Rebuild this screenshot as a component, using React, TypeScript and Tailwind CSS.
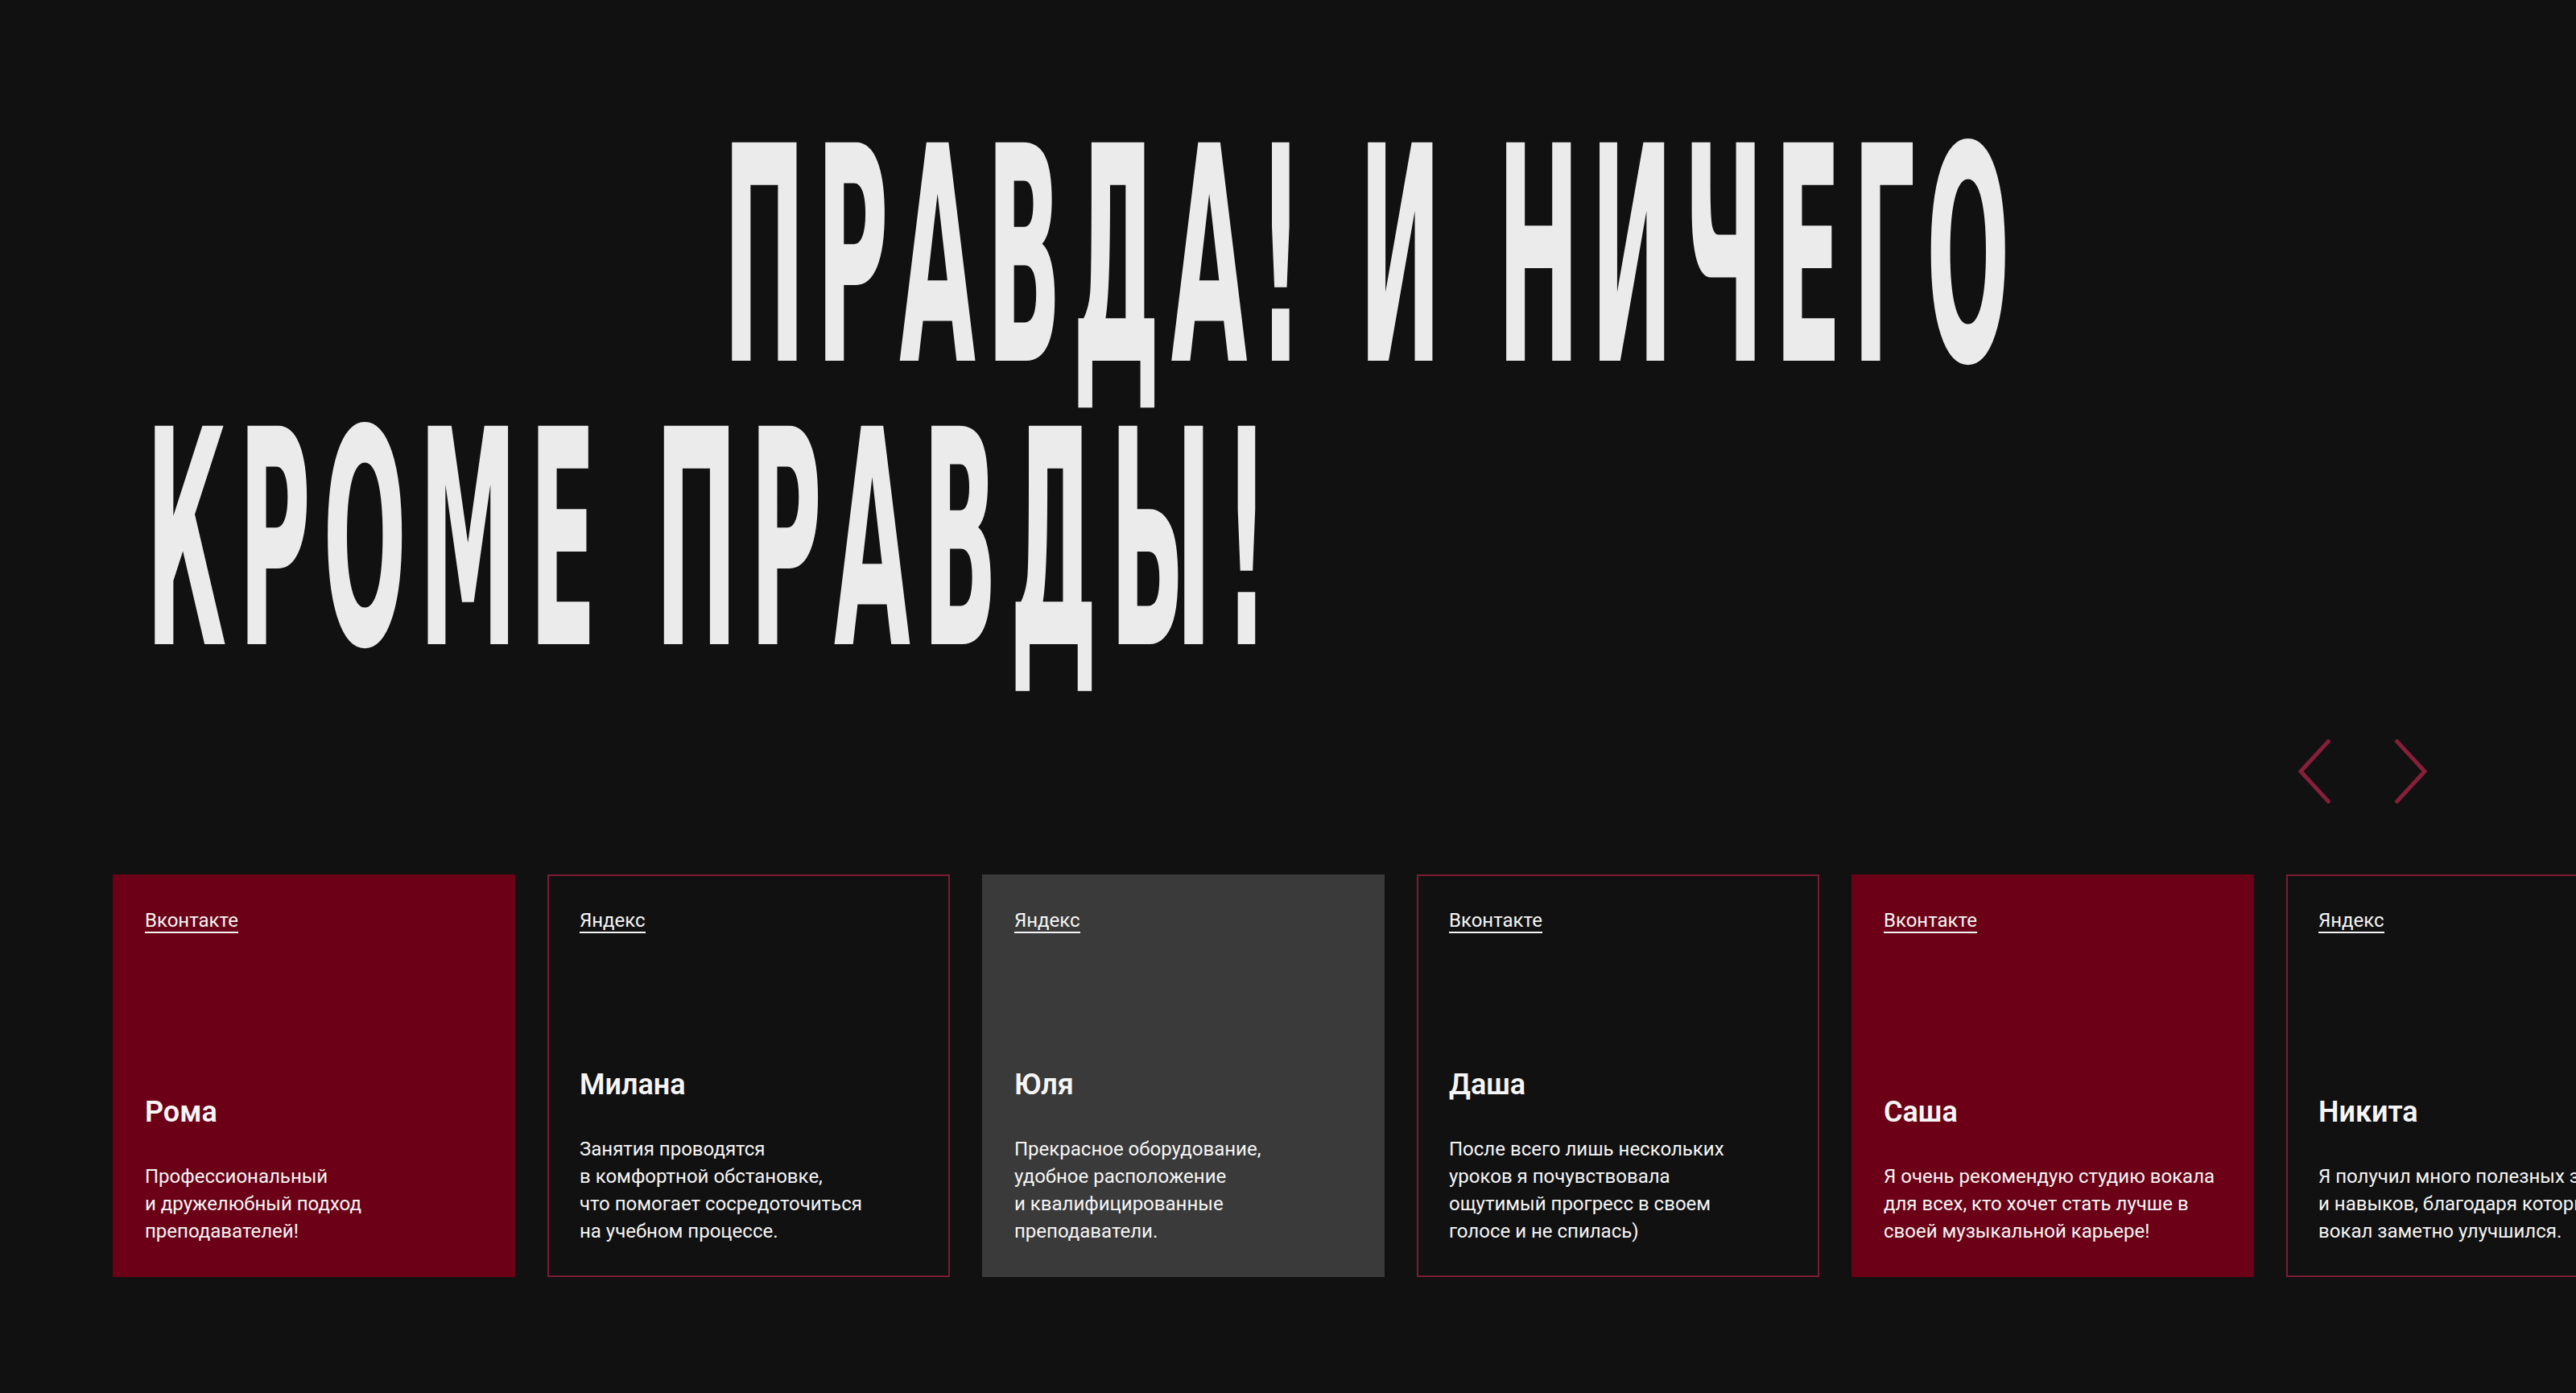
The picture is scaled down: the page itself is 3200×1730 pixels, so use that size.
const REVIEWS = [
  { source: "Вконтакте", name: "Рома", text: ["Профессиональный", "и дружелюбный подход", "преподавателей!"], tone: "red" },
  { source: "Яндекс", name: "Милана", text: ["Занятия проводятся", "в комфортной обстановке,", "что помогает сосредоточиться", "на учебном процессе."], tone: "outline" },
  { source: "Яндекс", name: "Юля", text: ["Прекрасное оборудование,", "удобное расположение", "и квалифицированные", "преподаватели."], tone: "gray" },
  { source: "Вконтакте", name: "Даша", text: ["После всего лишь нескольких", "уроков я почувствовала", "ощутимый прогресс в своем", "голосе и не спилась)"], tone: "outline" },
  { source: "Вконтакте", name: "Саша", text: ["Я очень рекомендую студию вокала", "для всех, кто хочет стать лучше в", "своей музыкальной карьере!"], tone: "red" },
  { source: "Яндекс", name: "Никита", text: ["Я получил много полезных знаний", "и навыков, благодаря которым мой", "вокал заметно улучшился."], tone: "outline" },
];

const TONES: Record<string, string> = {
  red: "bg-[#6b0016] border-[#6b0016]",
  gray: "bg-[#3a3a3a] border-[#3a3a3a]",
  outline: "border-[#7b1c33]",
};

function Arrow({ flip }: { flip?: boolean }) {
  return (
    <button type="button" aria-label={flip ? "Вперёд" : "Назад"} className="block">
      <svg width="40" height="80" viewBox="0 0 40 80" fill="none" stroke="#861f38" strokeWidth="5" className={flip ? "-scale-x-100" : ""}>
        <polyline points="39,1 3,40 39,79" />
      </svg>
    </button>
  );
}

export default function App() {
  return (
    <div className="h-screen overflow-hidden bg-[#111111] text-[#f5f5f5] font-['Roboto',sans-serif]">
      <h1 className="pt-[144px] text-[372px] leading-[352px] font-bold text-[#ebebeb] whitespace-nowrap font-['DejaVu_Sans',sans-serif]">
        <span className="block pl-[898px]">
          <span className="inline-block origin-left scale-x-[0.33] tracking-[40px]">ПРАВДА! И НИЧЕГО</span>
        </span>
        <span className="block pl-[181px]">
          <span className="inline-block origin-left scale-x-[0.33] tracking-[45px]">КРОМЕ ПРАВДЫ!</span>
        </span>
      </h1>

      <div className="mt-[70px] pr-[185px] flex justify-end gap-20">
        <Arrow />
        <Arrow flip />
      </div>

      <div className="mt-[88px] pl-[140px] flex gap-10">
        {REVIEWS.map((r) => (
          <article key={r.name} className={`w-[500px] h-[500px] shrink-0 border-2 p-[38px] flex flex-col ${TONES[r.tone]}`}>
            <a href="#" className="self-start h-[33px] text-[24px] leading-[34px] border-b-2 border-[#f5f5f5]">
              {r.source}
            </a>
            <div className="mt-auto">
              <h3 className="text-[36px] leading-[50px] font-semibold">{r.name}</h3>
              <p className="mt-[38px] text-[24px] leading-[34px]">
                {r.text.map((line) => (
                  <span key={line} className="block whitespace-nowrap">
                    {line}
                  </span>
                ))}
              </p>
            </div>
          </article>
        ))}
      </div>
    </div>
  );
}
